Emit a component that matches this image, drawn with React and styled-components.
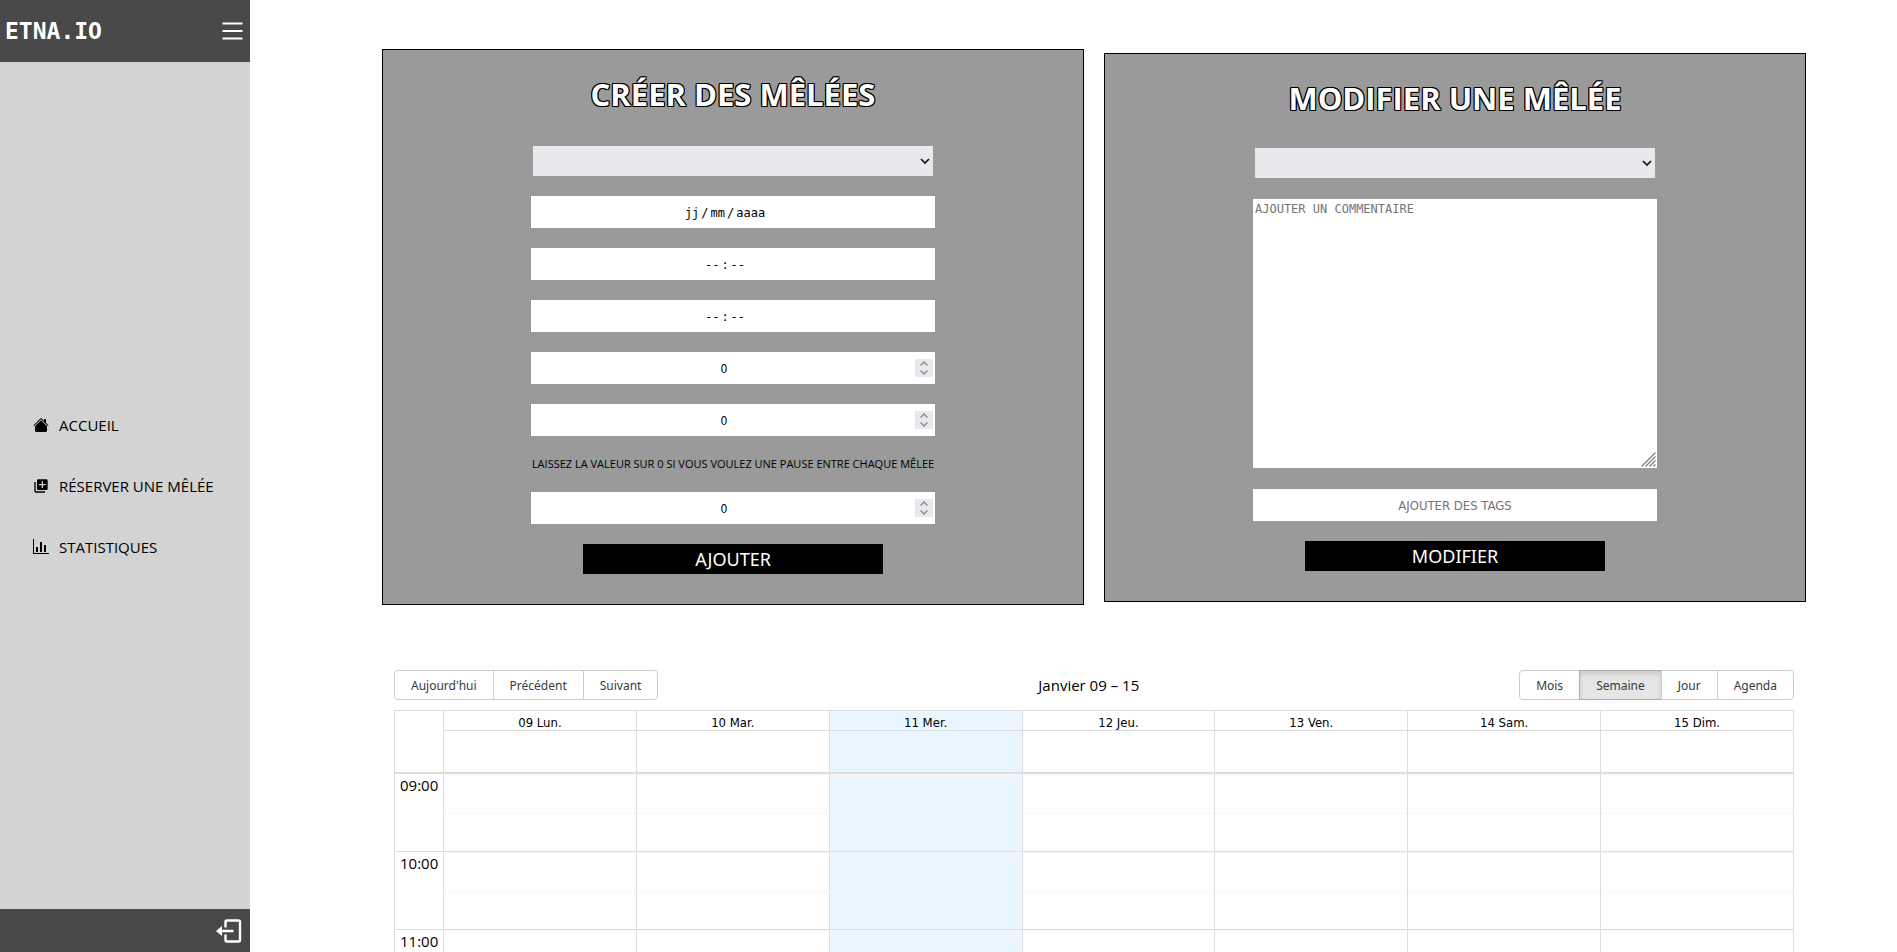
import React, { useState } from 'react';
import styled, { createGlobalStyle, css } from 'styled-components';
import { BsHouseFill } from 'react-icons/bs';
import { MdLibraryAdd } from 'react-icons/md';

const sans = '"Open Sans", "Noto Sans", sans-serif';
const condensed = '"DejaVu Sans Condensed", "DejaVu Sans", sans-serif';
const mono = '"DejaVu Sans Mono", "Liberation Mono", monospace';

const GlobalStyle = createGlobalStyle`
  *, *::before, *::after { box-sizing: border-box; }
  body { margin: 0; background: #fff; color: #000; font-family: ${sans}; font-size: 15px; }
  button, input, select, textarea { font: inherit; margin: 0; border: 0; border-radius: 0; outline: 0; }
`;

const Layout = styled.div`
  display: flex;
  height: 100vh;
`;

/* ---------- sidebar ---------- */

const Sidebar = styled.aside`
  flex: 0 0 250px;
  display: flex;
  flex-direction: column;
  background: #d3d3d3;
`;

const SidebarHeader = styled.header`
  display: flex;
  align-items: center;
  justify-content: space-between;
  height: 62px;
  padding: 0 7px 0 5px;
  background: #494949;
`;

const Brand = styled.span`
  font-family: ${mono};
  font-size: 23px;
  font-weight: bold;
  color: #fff;
`;

const IconButton = styled.button`
  display: flex;
  padding: 0;
  background: none;
  color: #fff;
  cursor: pointer;
`;

const Nav = styled.nav`
  flex: 1;
  display: flex;
  flex-direction: column;
  justify-content: center;
`;

const NavLink = styled.a`
  display: flex;
  align-items: center;
  gap: 10px;
  height: 61px;
  padding-left: 33px;
  color: #000;
  text-decoration: none;
`;

const SidebarFooter = styled.footer`
  display: flex;
  align-items: center;
  justify-content: flex-end;
  height: 43px;
  padding-right: 8px;
  background: #494949;
`;

/* ---------- forms ---------- */

const Main = styled.main`
  flex: 1;
  min-width: 0;
  padding: 49px 91px 40px 132px;
  overflow-y: auto;
  scrollbar-width: none;
`;

const Panels = styled.div`
  display: flex;
  align-items: center;
  gap: 20px;
`;

const Panel = styled.form`
  flex: 1;
  display: flex;
  flex-direction: column;
  align-items: center;
  gap: 20px;
  padding: 24px 0 30px;
  border: 1px solid #000;
  background: #9a9a9a;
`;

const PanelTitle = styled.h2`
  margin: 0 0 ${(p) => (p.$tight ? 10 : 12)}px;
  font-size: 31px;
  line-height: 40px;
  color: #fff;
  text-shadow: 1px 0 #000, -1px 0 #000, 0 1px #000, 0 -1px #000,
    1px 1px #000, -1px -1px #000, 1px -1px #000, -1px 1px #000;
`;

const SelectBox = styled.div`
  position: relative;
  width: 400px;
  height: 30px;

  svg {
    position: absolute;
    right: 3px;
    top: 12px;
    pointer-events: none;
  }
`;

const Select = styled.select`
  width: 100%;
  height: 100%;
  appearance: none;
  background: #e9e9ed;
`;

const Field = styled.div`
  display: flex;
  align-items: center;
  justify-content: center;
  width: 404px;
  height: 32px;
  background: #fff;
`;

const SegmentField = styled(Field)`
  gap: 2px;
  padding: 2px 16px 0 0;
  font-family: ${mono};
  font-size: 12px;
`;

const Segment = styled.input`
  width: ${(p) => p.$chars}ch;
  padding: 0;
  background: none;
  &::placeholder { color: #000; opacity: 1; }
`;

const NumberInput = styled.input`
  flex: 1;
  min-width: 0;
  padding: 2px 0 0 2px;
  appearance: textfield;
  background: none;
  font-family: ${condensed};
  font-size: 12px;
  text-align: center;

  &::-webkit-inner-spin-button { display: none; }
`;

const Stepper = styled.div`
  display: flex;
  flex-direction: column;
  margin-right: 2px;
  background: #e9e9ed;
`;

const StepButton = styled.button`
  display: flex;
  align-items: center;
  justify-content: center;
  width: 18px;
  height: 9px;
  padding: 0;
  background: none;
  color: #8f8f9d;
`;

const Hint = styled.p`
  margin: 0;
  font-size: 11px;
  line-height: 16px;
  white-space: nowrap;
`;

const CommentBox = styled.div`
  position: relative;
  width: 404px;
  height: 269px;
  margin: 1px 0;

  svg {
    position: absolute;
    right: 1px;
    bottom: 1px;
    pointer-events: none;
  }
`;

const Comment = styled.textarea`
  display: block;
  width: 100%;
  height: 100%;
  padding: 2px;
  resize: none;
  background: #fff;
  font-family: ${mono};
  font-size: 12px;
  line-height: 16px;
  &::placeholder { color: #757575; }
`;

const TagInput = styled.input`
  width: 404px;
  height: 32px;
  padding: 2px 0 0;
  background: #fff;
  font-family: ${condensed};
  font-size: 13px;
  text-align: center;
  &::placeholder { color: #757575; }
`;

const SubmitButton = styled.button`
  width: 300px;
  height: 30px;
  padding: 0;
  background: #000;
  color: #fff;
  font-family: "Noto Sans", sans-serif;
  font-size: 18px;
  line-height: 30px;
  cursor: pointer;
`;

/* ---------- calendar ---------- */

const Calendar = styled.section`
  margin: 65px 12px 0;
`;

const Toolbar = styled.div`
  display: flex;
  align-items: center;
  margin-bottom: 10px;
`;

const ToolbarLabel = styled.span`
  flex: 1;
  text-align: center;
`;

const ButtonGroup = styled.div`
  display: flex;
`;

const ToolbarButton = styled.button`
  height: 30px;
  padding: 0 16px;
  border: 1px solid #ccc;
  background: #fff;
  color: #373a3c;
  font-family: "Noto Sans", sans-serif;
  font-size: 12px;
  cursor: pointer;

  &:first-child { border-radius: 4px 0 0 4px; }
  &:last-child { border-radius: 0 4px 4px 0; }
  & + & { margin-left: -1px; }

  ${(p) => p.$active && css`
    border-color: #adadad;
    background: #e6e6e6;
    box-shadow: inset 0 3px 5px rgba(0, 0, 0, 0.125);
  `}
`;

const Week = styled.table`
  width: 100%;
  table-layout: fixed;
  border: 1px solid #ddd;
  border-collapse: separate;
  border-spacing: 0;
`;

const GutterColumn = styled.col`
  width: 48px;
`;

const dayCell = css`
  padding: 0;
  border-left: 1px solid #ddd;
  background: ${(p) => (p.$today ? '#eaf6ff' : 'transparent')};
`;

const Corner = styled.td`
  padding: 0;
  border-bottom: 2px solid #ddd;
`;

const DayHeader = styled.th`
  ${dayCell}
  height: 20px;
  padding-top: 4px;
  border-bottom: 1px solid #ddd;
  font-family: ${condensed};
  font-size: 13px;
  font-weight: normal;
  line-height: 15px;
`;

const AllDayCell = styled.td`
  ${dayCell}
  height: 43px;
  border-bottom: 2px solid #ddd;
`;

const HourLabel = styled.th`
  padding: 0 5px;
  border-bottom: 1px solid #ddd;
  font-weight: normal;
  line-height: 22px;
  text-align: right;
  vertical-align: top;
`;

const SlotCell = styled.td`
  ${dayCell}
  height: 39px;
  border-top: 1px solid #f7f7f7;
  ${(p) => p.$last && css`border-bottom: 1px solid #ddd;`}
`;

/* ---------- drawings ---------- */

const ChartIcon = () => (
  <svg width="16" height="16" viewBox="0 0 16 16" fill="currentColor">
    <path d="M0 0h1v14h15v1H0zM3 8h2v5H3zM7 3h2v10H7zM11 6h2v7h-2z" />
  </svg>
);

const MenuIcon = () => (
  <svg width="21" height="18" viewBox="0 0 21 18" stroke="currentColor" strokeWidth="2">
    <path d="M.5 1.5h20M.5 9h20M.5 16.5h20" />
  </svg>
);

const LogoutIcon = () => (
  <svg width="26" height="24" viewBox="0 0 26 24" fill="none" stroke="currentColor" strokeWidth="2.4">
    <path d="M9.5 8.5V3a1.500 1.500 0 0 1 1.500-1.500h11.500A1.500 1.500 0 0 1 24 3v18a1.500 1.500 0 0 1-1.500 1.500H11A1.500 1.500 0 0 1 9.500 21v-5.500M4 12h13.500" />
    <path d="M0 12l6-5v10z" fill="currentColor" stroke="none" />
  </svg>
);

const SelectArrow = () => (
  <svg width="10" height="7" viewBox="0 0 10 7" fill="none" stroke="#15141a" strokeWidth="1.7">
    <path d="M1 1l4 4 4-4" />
  </svg>
);

const StepArrow = ({ down }) => (
  <svg width="8" height="5" viewBox="0 0 8 5" fill="none" stroke="currentColor" strokeWidth="1.5">
    <path d={down ? 'M.5.5L4 4 7.500.5' : 'M.5 4.500L4 1l3.500 3.500'} />
  </svg>
);

const ResizeGrip = () => (
  <svg width="15" height="15" viewBox="0 0 15 15" stroke="#7d7d7d" strokeWidth="1.3">
    <path d="M.5 14.500l14-14M4.500 14.500l10-10M8.500 14.500l6-6M12.500 14.500l2-2" />
  </svg>
);

/* ---------- parts ---------- */

const BlankSelect = ({ label }) => (
  <SelectBox>
    <Select aria-label={label}>
      <option value=""></option>
    </Select>
    <SelectArrow />
  </SelectBox>
);

const DateField = () => (
  <SegmentField role="group" aria-label="Date">
    <Segment $chars={2} placeholder="jj" aria-label="Jour" />/
    <Segment $chars={2} placeholder="mm" aria-label="Mois" />/
    <Segment $chars={4} placeholder="aaaa" aria-label="Année" />
  </SegmentField>
);

const TimeField = ({ label }) => (
  <SegmentField role="group" aria-label={label}>
    <Segment $chars={2} placeholder="--" aria-label="Heures" />:
    <Segment $chars={2} placeholder="--" aria-label="Minutes" />
  </SegmentField>
);

const NumberField = ({ label }) => {
  const [value, setValue] = useState(0);
  return (
    <Field>
      <NumberInput type="number" aria-label={label} value={value}
        onChange={(e) => setValue(Number(e.target.value))} />
      <Stepper>
        <StepButton type="button" aria-label="Augmenter" onClick={() => setValue(value + 1)}>
          <StepArrow />
        </StepButton>
        <StepButton type="button" aria-label="Diminuer" onClick={() => setValue(value - 1)}>
          <StepArrow down />
        </StepButton>
      </Stepper>
    </Field>
  );
};

const links = [
  { label: 'ACCUEIL', Icon: BsHouseFill },
  { label: 'RÉSERVER UNE MÊLÉE', Icon: MdLibraryAdd },
  { label: 'STATISTIQUES', Icon: ChartIcon },
];
const days = ['09 Lun.', '10 Mar.', '11 Mer.', '12 Jeu.', '13 Ven.', '14 Sam.', '15 Dim.'];
const today = '11 Mer.';
const hours = ['09:00', '10:00', '11:00'];
const views = ['Mois', 'Semaine', 'Jour', 'Agenda'];

export default function App() {
  const [view, setView] = useState('Semaine');
  const submit = (e) => e.preventDefault();

  return (
    <Layout>
      <GlobalStyle />
      <Sidebar>
        <SidebarHeader>
          <Brand>ETNA.IO</Brand>
          <IconButton type="button" aria-label="Menu"><MenuIcon /></IconButton>
        </SidebarHeader>
        <Nav>
          {links.map(({ label, Icon }) => (
            <NavLink key={label} href="#"><Icon size={16} />{label}</NavLink>
          ))}
        </Nav>
        <SidebarFooter>
          <IconButton type="button" aria-label="Déconnexion"><LogoutIcon /></IconButton>
        </SidebarFooter>
      </Sidebar>

      <Main>
        <Panels>
          <Panel onSubmit={submit}>
            <PanelTitle>CRÉER DES MÊLÉES</PanelTitle>
            <BlankSelect label="Groupe" />
            <DateField />
            <TimeField label="Heure de début" />
            <TimeField label="Heure de fin" />
            <NumberField label="Durée" />
            <NumberField label="Nombre" />
            <Hint>LAISSEZ LA VALEUR SUR 0 SI VOUS VOULEZ UNE PAUSE ENTRE CHAQUE MÊLEE</Hint>
            <NumberField label="Pause" />
            <SubmitButton>AJOUTER</SubmitButton>
          </Panel>

          <Panel onSubmit={submit}>
            <PanelTitle $tight>MODIFIER UNE MÊLÉE</PanelTitle>
            <BlankSelect label="Mêlée" />
            <CommentBox>
              <Comment placeholder="AJOUTER UN COMMENTAIRE" aria-label="Commentaire" />
              <ResizeGrip />
            </CommentBox>
            <TagInput type="text" placeholder="AJOUTER DES TAGS" aria-label="Tags" />
            <SubmitButton>MODIFIER</SubmitButton>
          </Panel>
        </Panels>

        <Calendar>
          <Toolbar>
            <ButtonGroup>
              <ToolbarButton type="button">Aujourd'hui</ToolbarButton>
              <ToolbarButton type="button">Précédent</ToolbarButton>
              <ToolbarButton type="button">Suivant</ToolbarButton>
            </ButtonGroup>
            <ToolbarLabel>Janvier 09 – 15</ToolbarLabel>
            <ButtonGroup>
              {views.map((name) => (
                <ToolbarButton key={name} type="button" $active={name === view} onClick={() => setView(name)}>
                  {name}
                </ToolbarButton>
              ))}
            </ButtonGroup>
          </Toolbar>

          <Week>
            <colgroup>
              <GutterColumn />
              {days.map((day) => <col key={day} />)}
            </colgroup>
            <thead>
              <tr>
                <Corner rowSpan={2} />
                {days.map((day) => <DayHeader key={day} scope="col" $today={day === today}>{day}</DayHeader>)}
              </tr>
              <tr>
                {days.map((day) => <AllDayCell key={day} $today={day === today} />)}
              </tr>
            </thead>
            {hours.map((hour) => (
              <tbody key={hour}>
                <tr>
                  <HourLabel scope="rowgroup" rowSpan={2}>{hour}</HourLabel>
                  {days.map((day) => <SlotCell key={day} $today={day === today} />)}
                </tr>
                <tr>
                  {days.map((day) => <SlotCell key={day} $last $today={day === today} />)}
                </tr>
              </tbody>
            ))}
          </Week>
        </Calendar>
      </Main>
    </Layout>
  );
}
